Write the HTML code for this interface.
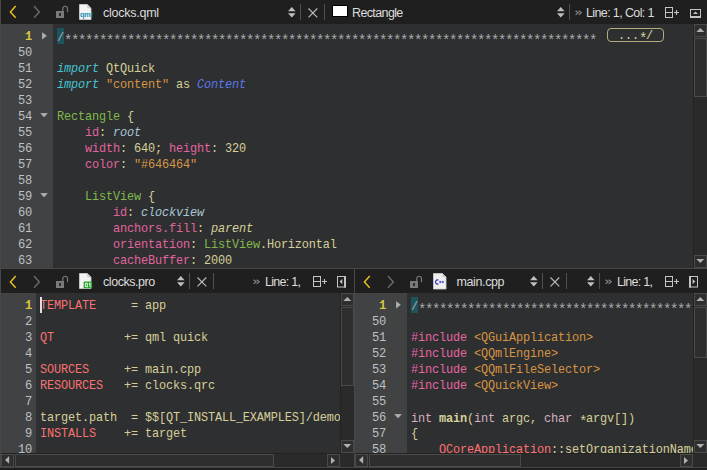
<!DOCTYPE html><html><head><meta charset="utf-8"><style>
html,body{margin:0;padding:0;background:#1e1e1e;width:707px;height:470px;overflow:hidden;position:relative}
.a{position:absolute;display:block}
.ln{position:absolute;font-family:"Liberation Mono",monospace;font-size:12.1px;letter-spacing:-0.26px;line-height:16px;height:16px;white-space:pre;text-align:right;padding-top:1px}
.code{position:absolute;font-family:"Liberation Mono",monospace;font-size:11.9px;letter-spacing:-0.14px;line-height:16px;height:16px;white-space:pre;padding-top:1px}
.ast{position:relative;top:3.5px;font-size:14px;letter-spacing:-1.4px}
.lab{position:absolute;font-family:"Liberation Sans",sans-serif;font-size:12.5px;color:#dcdcdc;white-space:pre;line-height:14px}
.sb{border:1px solid #4a4a4a;background:#2e2e2e}
</style></head><body>
<div class="a" style="left:0px;top:0px;width:707px;height:24px;background:#1f1f1f;"></div>
<svg class="a" style="left:9px;top:5px" width="9" height="14" viewBox="0 0 9 14"><path d="M6.7 1 L1.4 7 L6.7 12.7" fill="none" stroke="#e8c31e" stroke-width="1.45"/></svg>
<svg class="a" style="left:32px;top:5px" width="9" height="14" viewBox="0 0 9 14"><path d="M2 1 L7.3 7 L2 12.7" fill="none" stroke="#6a6a6a" stroke-width="1.45"/></svg>
<svg class="a" style="left:55px;top:5px" width="14" height="14" viewBox="0 0 14 14"><rect x="1" y="6" width="8" height="7" fill="#7a7a7a"/><rect x="4" y="8" width="2" height="3" fill="#2c2c2c"/><path d="M7.8 6 V3.6 A2.35 2.35 0 0 1 12.5 3.6 V7.2" fill="none" stroke="#7a7a7a" stroke-width="1.15"/></svg>
<svg class="a" style="left:79px;top:4px" width="14" height="17" viewBox="0 0 14 17"><path d="M0.5 0.5 H8.3 L12 4.2 V15.5 H0.5 Z" fill="#f4f4f4" stroke="#d2d2d2" stroke-width="0.8"/><path d="M8.3 0.5 V4.2 H12 Z" fill="#c8c8c8"/><text x="0.9" y="13.2" font-family="Liberation Sans" font-weight="bold" font-size="7.4" letter-spacing="-0.15" fill="#1c8db5">qml</text></svg>
<div class="lab" style="left:103px;top:6px;letter-spacing:-0.25px;color:#dcdcdc">clocks.qml</div>
<svg class="a" style="left:288px;top:6.5px" width="8" height="11" viewBox="0 0 8 11"><path d="M3.8 0.1 L7.6 4.2 L0 4.2 Z M0 6.2 L7.6 6.2 L3.8 10.5 Z" fill="#c0c0c0"/></svg>
<div class="a" style="left:300px;top:4px;width:1px;height:16px;background:#505050;"></div>
<svg class="a" style="left:307.5px;top:7.8px" width="10" height="10" viewBox="0 0 10 10"><path d="M0.5 0.5 L9.3 9.3 M9.3 0.5 L0.5 9.3" stroke="#b8b8b8" stroke-width="1.15"/></svg>
<div class="a" style="left:324px;top:4px;width:1px;height:16px;background:#505050;"></div>
<div class="a" style="left:332px;top:5px;width:16px;height:12px;background:#000;"></div>
<div class="a" style="left:333px;top:6px;width:14px;height:10px;background:#fff;"></div>
<div class="lab" style="left:352px;top:6px;letter-spacing:-0.62px;color:#dcdcdc">Rectangle</div>
<svg class="a" style="left:557px;top:6.5px" width="8" height="11" viewBox="0 0 8 11"><path d="M3.8 0.1 L7.6 4.2 L0 4.2 Z M0 6.2 L7.6 6.2 L3.8 10.5 Z" fill="#c0c0c0"/></svg>
<div class="a" style="left:569px;top:4px;width:1px;height:16px;background:#505050;"></div>
<svg class="a" style="left:575px;top:9.7px" width="8" height="6" viewBox="0 0 8 6"><path d="M0.6 0.7 L3.1 2.8 L0.6 4.9 M3.7 0.7 L6.2 2.8 L3.7 4.9" fill="none" stroke="#858585" stroke-width="1.2"/></svg>
<div class="lab" style="left:586px;top:6px;letter-spacing:-0.62px;color:#dcdcdc">Line: 1, Col: 1</div>
<svg class="a" style="left:664px;top:6px" width="16" height="14" viewBox="0 0 16 14"><rect x="1.5" y="1.5" width="7" height="10" fill="none" stroke="#c4c4c4"/><path d="M1 6.5 H9" stroke="#c4c4c4"/><path d="M10 6.5 H15 M12.5 4 V9" stroke="#c4c4c4" stroke-width="1.1"/></svg>
<svg class="a" style="left:689px;top:8px" width="13" height="11" viewBox="0 0 13 11"><rect x="1.5" y="1.5" width="10" height="7.5" fill="none" stroke="#c4c4c4"/><path d="M1 9 H12" stroke="#c4c4c4" stroke-width="2"/><path d="M4 6 L6.5 3.5 L9 6 Z" fill="#c4c4c4"/></svg>
<div class="a" style="left:0px;top:24px;width:693px;height:244px;background:#2e2f30;"></div>
<div class="a" style="left:0px;top:24px;width:53px;height:244px;background:#404244;"></div>
<div class="ln" style="left:0px;width:32px;top:28px;color:#d6c540;font-weight:bold">1</div>
<svg class="a" style="left:42px;top:31.5px" width="5" height="8" viewBox="0 0 5 8"><path d="M0 0 L5 3.85 L0 7.7 Z" fill="#b0b0b0" stroke="#2a2a2a" stroke-opacity="0.35" stroke-width="0.6"/></svg>
<div class="ln" style="left:0px;width:32px;top:44px;color:#bec0c2;font-weight:normal">50</div>
<div class="ln" style="left:0px;width:32px;top:60px;color:#bec0c2;font-weight:normal">51</div>
<div class="ln" style="left:0px;width:32px;top:76px;color:#bec0c2;font-weight:normal">52</div>
<div class="ln" style="left:0px;width:32px;top:92px;color:#bec0c2;font-weight:normal">53</div>
<div class="ln" style="left:0px;width:32px;top:108px;color:#bec0c2;font-weight:normal">54</div>
<svg class="a" style="left:40px;top:113px" width="9" height="5" viewBox="0 0 9 5"><path d="M0 0 L8.1 0 L4.05 4.5 Z" fill="#b0b0b0" stroke="#2a2a2a" stroke-opacity="0.35" stroke-width="0.6"/></svg>
<div class="ln" style="left:0px;width:32px;top:124px;color:#bec0c2;font-weight:normal">55</div>
<div class="ln" style="left:0px;width:32px;top:140px;color:#bec0c2;font-weight:normal">56</div>
<div class="ln" style="left:0px;width:32px;top:156px;color:#bec0c2;font-weight:normal">57</div>
<div class="ln" style="left:0px;width:32px;top:172px;color:#bec0c2;font-weight:normal">58</div>
<div class="ln" style="left:0px;width:32px;top:188px;color:#bec0c2;font-weight:normal">59</div>
<svg class="a" style="left:40px;top:193px" width="9" height="5" viewBox="0 0 9 5"><path d="M0 0 L8.1 0 L4.05 4.5 Z" fill="#b0b0b0" stroke="#2a2a2a" stroke-opacity="0.35" stroke-width="0.6"/></svg>
<div class="ln" style="left:0px;width:32px;top:204px;color:#bec0c2;font-weight:normal">60</div>
<div class="ln" style="left:0px;width:32px;top:220px;color:#bec0c2;font-weight:normal">61</div>
<div class="ln" style="left:0px;width:32px;top:236px;color:#bec0c2;font-weight:normal">62</div>
<div class="ln" style="left:0px;width:32px;top:252px;color:#bec0c2;font-weight:normal">63</div>
<div class="a" style="left:57px;top:24px;width:636px;height:244px;overflow:hidden">
<div class="a" style="left:0;top:4px;width:7px;height:16px;background:#1d545c"></div>
<div class="a" style="left:550px;top:4px;width:55px;height:12px;border:1px solid #b5ad80;border-radius:4px"></div>
<div class="code" style="left:561px;top:2px;color:#d6cf9a">...<span class="ast">*</span>/</div>
<div class="code" style="left:0;top:4px"><span style="color:#a8abb0">/<span class="ast">****************************************************************************</span></span></div>
<div class="code" style="left:0;top:20px"></div>
<div class="code" style="left:0;top:36px"><span style="color:#45c6d6;font-style:italic">import</span><span style="color:#d6cf9a"> QtQuick</span></div>
<div class="code" style="left:0;top:52px"><span style="color:#45c6d6;font-style:italic">import</span><span style="color:#d6cf9a"> </span><span style="color:#d69545">"content"</span><span style="color:#d6cf9a"> as </span><span style="color:#5b78e8;font-style:italic">Content</span></div>
<div class="code" style="left:0;top:68px"></div>
<div class="code" style="left:0;top:84px"><span style="color:#80b84c">Rectangle</span><span style="color:#d6cf9a"> {</span></div>
<div class="code" style="left:0;top:100px"><span style="color:#d6cf9a">    </span><span style="color:#e0649f">id</span><span style="color:#d6cf9a">: </span><span style="color:#a6c6d6;font-style:italic">root</span></div>
<div class="code" style="left:0;top:116px"><span style="color:#d6cf9a">    </span><span style="color:#e0649f">width</span><span style="color:#d6cf9a">: 640; </span><span style="color:#e0649f">height</span><span style="color:#d6cf9a">: 320</span></div>
<div class="code" style="left:0;top:132px"><span style="color:#d6cf9a">    </span><span style="color:#e0649f">color</span><span style="color:#d6cf9a">: </span><span style="color:#d69545">"#646464"</span></div>
<div class="code" style="left:0;top:148px"></div>
<div class="code" style="left:0;top:164px"><span style="color:#d6cf9a">    </span><span style="color:#80b84c">ListView</span><span style="color:#d6cf9a"> {</span></div>
<div class="code" style="left:0;top:180px"><span style="color:#d6cf9a">        </span><span style="color:#e0649f">id</span><span style="color:#d6cf9a">: </span><span style="color:#a6c6d6;font-style:italic">clockview</span></div>
<div class="code" style="left:0;top:196px"><span style="color:#d6cf9a">        </span><span style="color:#e0649f">anchors.fill</span><span style="color:#d6cf9a">: </span><span style="color:#d6cf9a;font-style:italic">parent</span></div>
<div class="code" style="left:0;top:212px"><span style="color:#d6cf9a">        </span><span style="color:#e0649f">orientation</span><span style="color:#d6cf9a">: </span><span style="color:#80b84c">ListView</span><span style="color:#d6cf9a">.Horizontal</span></div>
<div class="code" style="left:0;top:228px"><span style="color:#d6cf9a">        </span><span style="color:#e0649f">cacheBuffer</span><span style="color:#d6cf9a">: 2000</span></div>
</div>
<div class="a" style="left:693px;top:24px;width:14px;height:244px;background:#2a2a2a;"></div>
<div class="a" style="left:693px;top:24px;width:1px;height:244px;background:#232323;"></div>
<div class="a sb" style="left:694px;top:24px;width:11px;height:11px"></div>
<svg class="a" style="left:696px;top:28px" width="9" height="4" viewBox="0 0 9 4"><path d="M4.3 0 L8.3 4 L0.3 4 Z" fill="#b0b0b0"/></svg>
<div class="a sb" style="left:694px;top:38px;width:11px;height:57px"></div>
<div class="a sb" style="left:694px;top:255px;width:11px;height:11px"></div>
<svg class="a" style="left:696px;top:259px" width="9" height="4" viewBox="0 0 9 4"><path d="M0.3 0 L8.3 0 L4.3 4 Z" fill="#b0b0b0"/></svg>
<div class="a" style="left:0px;top:268px;width:707px;height:1px;background:#474747;"></div>
<div class="a" style="left:0px;top:269px;width:354px;height:24px;background:#1f1f1f;"></div>
<svg class="a" style="left:9px;top:274.5px" width="9" height="14" viewBox="0 0 9 14"><path d="M6.7 1 L1.4 7 L6.7 12.7" fill="none" stroke="#e8c31e" stroke-width="1.45"/></svg>
<svg class="a" style="left:32px;top:274.5px" width="9" height="14" viewBox="0 0 9 14"><path d="M2 1 L7.3 7 L2 12.7" fill="none" stroke="#6a6a6a" stroke-width="1.45"/></svg>
<svg class="a" style="left:55px;top:274.5px" width="14" height="14" viewBox="0 0 14 14"><rect x="1" y="6" width="8" height="7" fill="#7a7a7a"/><rect x="4" y="8" width="2" height="3" fill="#2c2c2c"/><path d="M7.8 6 V3.6 A2.35 2.35 0 0 1 12.5 3.6 V7.2" fill="none" stroke="#7a7a7a" stroke-width="1.15"/></svg>
<svg class="a" style="left:79px;top:272.5px" width="14" height="17" viewBox="0 0 14 17"><path d="M0.5 0.5 H8.3 L12 4.2 V15.5 H0.5 Z" fill="#f4f4f4" stroke="#d2d2d2" stroke-width="0.8"/><path d="M8.3 0.5 V4.2 H12 Z" fill="#c8c8c8"/><rect x="4.6" y="8.6" width="8.6" height="6.6" rx="0.8" fill="#23a326"/><path d="M6.3 10.2 h2 v3.4 h-2 z" fill="none" stroke="#fff" stroke-width="0.9"/><path d="M8.1 13.6 l0.9 0.8" stroke="#fff" stroke-width="0.8"/><path d="M10.8 9.6 v3.6 q0 0.6 0.6 0.6 h0.8 M9.9 11 h2.2" fill="none" stroke="#fff" stroke-width="0.9"/></svg>
<div class="lab" style="left:103px;top:275px;letter-spacing:-0.45px;color:#dcdcdc">clocks.pro</div>
<svg class="a" style="left:177px;top:276px" width="8" height="11" viewBox="0 0 8 11"><path d="M3.8 0.1 L7.6 4.2 L0 4.2 Z M0 6.2 L7.6 6.2 L3.8 10.5 Z" fill="#c0c0c0"/></svg>
<div class="a" style="left:189px;top:273px;width:1px;height:16px;background:#505050;"></div>
<svg class="a" style="left:196.8px;top:276.6px" width="10" height="10" viewBox="0 0 10 10"><path d="M0.5 0.5 L9.3 9.3 M9.3 0.5 L0.5 9.3" stroke="#b8b8b8" stroke-width="1.15"/></svg>
<div class="a" style="left:213px;top:273px;width:1px;height:16px;background:#505050;"></div>
<svg class="a" style="left:253px;top:278.7px" width="8" height="6" viewBox="0 0 8 6"><path d="M0.6 0.7 L3.1 2.8 L0.6 4.9 M3.7 0.7 L6.2 2.8 L3.7 4.9" fill="none" stroke="#858585" stroke-width="1.2"/></svg>
<div class="lab" style="left:265px;top:275px;letter-spacing:-0.73px;color:#dcdcdc">Line: 1,</div>
<svg class="a" style="left:312px;top:275px" width="16" height="14" viewBox="0 0 16 14"><rect x="1.5" y="1.5" width="7" height="10" fill="none" stroke="#c4c4c4"/><path d="M1 6.5 H9" stroke="#c4c4c4"/><path d="M10 6.5 H15 M12.5 4 V9" stroke="#c4c4c4" stroke-width="1.1"/></svg>
<svg class="a" style="left:336px;top:275px" width="11" height="13" viewBox="0 0 11 13"><rect x="1.5" y="1.5" width="8" height="10.5" fill="none" stroke="#c4c4c4"/><path d="M9 1 V12.5" stroke="#c4c4c4" stroke-width="2"/><path d="M6.3 4 L3.6 6.6 L6.3 9.2 Z" fill="#c4c4c4"/></svg>
<div class="a" style="left:0px;top:293px;width:340px;height:160px;background:#2e2f30;"></div>
<div class="a" style="left:0px;top:293px;width:36px;height:160px;background:#404244;"></div>
<div class="ln" style="left:0px;width:32px;top:297px;color:#d6c540;font-weight:bold">1</div>
<div class="ln" style="left:0px;width:32px;top:313px;color:#bec0c2;font-weight:normal">2</div>
<div class="ln" style="left:0px;width:32px;top:329px;color:#bec0c2;font-weight:normal">3</div>
<div class="ln" style="left:0px;width:32px;top:345px;color:#bec0c2;font-weight:normal">4</div>
<div class="ln" style="left:0px;width:32px;top:361px;color:#bec0c2;font-weight:normal">5</div>
<div class="ln" style="left:0px;width:32px;top:377px;color:#bec0c2;font-weight:normal">6</div>
<div class="ln" style="left:0px;width:32px;top:393px;color:#bec0c2;font-weight:normal">7</div>
<div class="ln" style="left:0px;width:32px;top:409px;color:#bec0c2;font-weight:normal">8</div>
<div class="ln" style="left:0px;width:32px;top:425px;color:#bec0c2;font-weight:normal">9</div>
<div class="ln" style="left:0px;width:32px;top:441px;color:#bec0c2;font-weight:normal">10</div>
<div class="a" style="left:40px;top:293px;width:300px;height:160px;overflow:hidden">
<div class="code" style="left:0;top:4px"><span style="color:#f87272">TEMPLATE</span><span style="color:#d6cf9a">     = app</span></div>
<div class="code" style="left:0;top:20px"></div>
<div class="code" style="left:0;top:36px"><span style="color:#f87272">QT</span><span style="color:#d6cf9a">          += qml quick</span></div>
<div class="code" style="left:0;top:52px"></div>
<div class="code" style="left:0;top:68px"><span style="color:#f87272">SOURCES</span><span style="color:#d6cf9a">     += main.cpp</span></div>
<div class="code" style="left:0;top:84px"><span style="color:#f87272">RESOURCES</span><span style="color:#d6cf9a">   += clocks.qrc</span></div>
<div class="code" style="left:0;top:100px"></div>
<div class="code" style="left:0;top:116px"><span style="color:#d6cf9a">target.path  = $$[QT_INSTALL_EXAMPLES]/demos/clocks</span></div>
<div class="code" style="left:0;top:132px"><span style="color:#f87272">INSTALLS</span><span style="color:#d6cf9a">    += target</span></div>
<div class="code" style="left:0;top:148px"></div>
</div>
<div class="a" style="left:40px;top:297px;width:2px;height:16px;background:#e0e0e0;"></div>
<div class="a" style="left:340px;top:293px;width:14px;height:160px;background:#2a2a2a;"></div>
<div class="a" style="left:340px;top:293px;width:1px;height:160px;background:#232323;"></div>
<div class="a sb" style="left:341px;top:293px;width:11px;height:11px"></div>
<svg class="a" style="left:343px;top:297px" width="9" height="4" viewBox="0 0 9 4"><path d="M4.3 0 L8.3 4 L0.3 4 Z" fill="#b0b0b0"/></svg>
<div class="a sb" style="left:341px;top:307px;width:11px;height:77px"></div>
<div class="a sb" style="left:341px;top:440px;width:11px;height:11px"></div>
<svg class="a" style="left:343px;top:444px" width="9" height="4" viewBox="0 0 9 4"><path d="M0.3 0 L8.3 0 L4.3 4 Z" fill="#b0b0b0"/></svg>
<div class="a" style="left:0px;top:453px;width:340px;height:14px;background:#2a2a2a;"></div>
<div class="a" style="left:0px;top:453px;width:340px;height:1px;background:#232323;"></div>
<div class="a sb" style="left:1px;top:454px;width:11px;height:11px"></div>
<svg class="a" style="left:4.9px;top:456px" width="5" height="8" viewBox="0 0 5 8"><path d="M4.2 0 L4.2 7.8 L0 3.9 Z" fill="#b0b0b0"/></svg>
<div class="a sb" style="left:15px;top:454px;width:257px;height:11px"></div>
<div class="a sb" style="left:327px;top:454px;width:11px;height:11px"></div>
<svg class="a" style="left:331px;top:457px" width="4" height="7" viewBox="0 0 4 7"><path d="M0 0 L4 3.5 L0 7 Z" fill="#b0b0b0"/></svg>
<div class="a" style="left:340px;top:453px;width:14px;height:14px;background:#2a2a2a;"></div>
<div class="a" style="left:355px;top:269px;width:352px;height:24px;background:#1f1f1f;"></div>
<svg class="a" style="left:363px;top:274.5px" width="9" height="14" viewBox="0 0 9 14"><path d="M6.7 1 L1.4 7 L6.7 12.7" fill="none" stroke="#e8c31e" stroke-width="1.45"/></svg>
<svg class="a" style="left:386px;top:274.5px" width="9" height="14" viewBox="0 0 9 14"><path d="M2 1 L7.3 7 L2 12.7" fill="none" stroke="#6a6a6a" stroke-width="1.45"/></svg>
<svg class="a" style="left:409px;top:274.5px" width="14" height="14" viewBox="0 0 14 14"><rect x="1" y="6" width="8" height="7" fill="#7a7a7a"/><rect x="4" y="8" width="2" height="3" fill="#2c2c2c"/><path d="M7.8 6 V3.6 A2.35 2.35 0 0 1 12.5 3.6 V7.2" fill="none" stroke="#7a7a7a" stroke-width="1.15"/></svg>
<svg class="a" style="left:433px;top:272.5px" width="14" height="17" viewBox="0 0 14 17"><path d="M0.5 0.5 H9.5 L13 4 V16 H0.5 Z" fill="#f0eeee" stroke="#cfcfcf" stroke-width="0.8"/><path d="M9.5 0.5 V4 H13 Z" fill="#c4c4c4"/><path d="M5.4 7.3 A1.8 2.1 0 1 0 5.4 10.7" fill="none" stroke="#2a3cc8" stroke-width="1.2"/><path d="M6.1 9 h2.3 M7.25 7.85 v2.3 M8.7 9 h2.3 M9.85 7.85 v2.3" stroke="#2a3cc8" stroke-width="0.85"/></svg>
<div class="lab" style="left:456.5px;top:275px;letter-spacing:-0.38px;color:#dcdcdc">main.cpp</div>
<svg class="a" style="left:530px;top:276px" width="8" height="11" viewBox="0 0 8 11"><path d="M3.8 0.1 L7.6 4.2 L0 4.2 Z M0 6.2 L7.6 6.2 L3.8 10.5 Z" fill="#c0c0c0"/></svg>
<div class="a" style="left:542px;top:273px;width:1px;height:16px;background:#505050;"></div>
<svg class="a" style="left:549.8px;top:276.6px" width="10" height="10" viewBox="0 0 10 10"><path d="M0.5 0.5 L9.3 9.3 M9.3 0.5 L0.5 9.3" stroke="#b8b8b8" stroke-width="1.15"/></svg>
<div class="a" style="left:566px;top:273px;width:1px;height:16px;background:#505050;"></div>
<svg class="a" style="left:587px;top:276px" width="8" height="11" viewBox="0 0 8 11"><path d="M3.8 0.1 L7.6 4.2 L0 4.2 Z M0 6.2 L7.6 6.2 L3.8 10.5 Z" fill="#c0c0c0"/></svg>
<div class="a" style="left:599px;top:273px;width:1px;height:16px;background:#505050;"></div>
<svg class="a" style="left:605px;top:278.7px" width="8" height="6" viewBox="0 0 8 6"><path d="M0.6 0.7 L3.1 2.8 L0.6 4.9 M3.7 0.7 L6.2 2.8 L3.7 4.9" fill="none" stroke="#858585" stroke-width="1.2"/></svg>
<div class="lab" style="left:617px;top:275px;letter-spacing:-0.73px;color:#dcdcdc">Line: 1,</div>
<svg class="a" style="left:664px;top:275px" width="16" height="14" viewBox="0 0 16 14"><rect x="1.5" y="1.5" width="7" height="10" fill="none" stroke="#c4c4c4"/><path d="M1 6.5 H9" stroke="#c4c4c4"/><path d="M10 6.5 H15 M12.5 4 V9" stroke="#c4c4c4" stroke-width="1.1"/></svg>
<svg class="a" style="left:688px;top:275px" width="11" height="13" viewBox="0 0 11 13"><rect x="1.5" y="1.5" width="8" height="10.5" fill="none" stroke="#c4c4c4"/><path d="M2 1 V12.5" stroke="#c4c4c4" stroke-width="2"/><path d="M4.6 4 L7.3 6.6 L4.6 9.2 Z" fill="#c4c4c4"/></svg>
<div class="a" style="left:355px;top:293px;width:338px;height:160px;background:#2e2f30;"></div>
<div class="a" style="left:355px;top:293px;width:52px;height:160px;background:#404244;"></div>
<div class="ln" style="left:355px;width:31px;top:297px;color:#d6c540;font-weight:bold">1</div>
<svg class="a" style="left:396px;top:300.5px" width="5" height="8" viewBox="0 0 5 8"><path d="M0 0 L5 3.85 L0 7.7 Z" fill="#b0b0b0" stroke="#2a2a2a" stroke-opacity="0.35" stroke-width="0.6"/></svg>
<div class="ln" style="left:355px;width:31px;top:313px;color:#bec0c2;font-weight:normal">50</div>
<div class="ln" style="left:355px;width:31px;top:329px;color:#bec0c2;font-weight:normal">51</div>
<div class="ln" style="left:355px;width:31px;top:345px;color:#bec0c2;font-weight:normal">52</div>
<div class="ln" style="left:355px;width:31px;top:361px;color:#bec0c2;font-weight:normal">53</div>
<div class="ln" style="left:355px;width:31px;top:377px;color:#bec0c2;font-weight:normal">54</div>
<div class="ln" style="left:355px;width:31px;top:393px;color:#bec0c2;font-weight:normal">55</div>
<div class="ln" style="left:355px;width:31px;top:409px;color:#bec0c2;font-weight:normal">56</div>
<svg class="a" style="left:394px;top:414px" width="9" height="5" viewBox="0 0 9 5"><path d="M0 0 L8.1 0 L4.05 4.5 Z" fill="#b0b0b0" stroke="#2a2a2a" stroke-opacity="0.35" stroke-width="0.6"/></svg>
<div class="ln" style="left:355px;width:31px;top:425px;color:#bec0c2;font-weight:normal">57</div>
<div class="ln" style="left:355px;width:31px;top:441px;color:#bec0c2;font-weight:normal">58</div>
<div class="a" style="left:411px;top:293px;width:282px;height:160px;overflow:hidden">
<div class="a" style="left:0;top:4px;width:7px;height:16px;background:#1d545c"></div>
<div class="code" style="left:0;top:4px"><span style="color:#a8abb0">/<span class="ast">****************************************************************************</span></span></div>
<div class="code" style="left:0;top:20px"></div>
<div class="code" style="left:0;top:36px"><span style="color:#e466a2">#include</span><span style="color:#d6cf9a"> </span><span style="color:#d69545">&lt;QGuiApplication&gt;</span></div>
<div class="code" style="left:0;top:52px"><span style="color:#e466a2">#include</span><span style="color:#d6cf9a"> </span><span style="color:#d69545">&lt;QQmlEngine&gt;</span></div>
<div class="code" style="left:0;top:68px"><span style="color:#e466a2">#include</span><span style="color:#d6cf9a"> </span><span style="color:#d69545">&lt;QQmlFileSelector&gt;</span></div>
<div class="code" style="left:0;top:84px"><span style="color:#e466a2">#include</span><span style="color:#d6cf9a"> </span><span style="color:#d69545">&lt;QQuickView&gt;</span></div>
<div class="code" style="left:0;top:100px"></div>
<div class="code" style="left:0;top:116px"><span style="color:#d6b0c0">int</span><span style="color:#d6cf9a"> </span><span style="color:#d6cf9a;font-weight:bold">main</span><span style="color:#d6cf9a">(</span><span style="color:#d6b0c0">int</span><span style="color:#d6cf9a"> argc, </span><span style="color:#d6b0c0">char</span><span style="color:#d6cf9a"> </span><span style="color:#d6cf9a"><span class="ast">*</span></span><span style="color:#d6cf9a">argv[])</span></div>
<div class="code" style="left:0;top:132px"><span style="color:#d6cf9a">{</span></div>
<div class="code" style="left:0;top:148px"><span style="color:#d6cf9a">    </span><span style="color:#ff7070">QCoreApplication</span><span style="color:#d6cf9a">::setOrganizationName(QStringLiteral("QtProject"));</span></div>
</div>
<div class="a" style="left:693px;top:293px;width:14px;height:160px;background:#2a2a2a;"></div>
<div class="a" style="left:693px;top:293px;width:1px;height:160px;background:#232323;"></div>
<div class="a sb" style="left:694px;top:293px;width:11px;height:11px"></div>
<svg class="a" style="left:696px;top:297px" width="9" height="4" viewBox="0 0 9 4"><path d="M4.3 0 L8.3 4 L0.3 4 Z" fill="#b0b0b0"/></svg>
<div class="a sb" style="left:694px;top:307px;width:11px;height:49px"></div>
<div class="a sb" style="left:694px;top:440px;width:11px;height:11px"></div>
<svg class="a" style="left:696px;top:444px" width="9" height="4" viewBox="0 0 9 4"><path d="M0.3 0 L8.3 0 L4.3 4 Z" fill="#b0b0b0"/></svg>
<div class="a" style="left:354px;top:453px;width:339px;height:14px;background:#2a2a2a;"></div>
<div class="a" style="left:354px;top:453px;width:339px;height:1px;background:#232323;"></div>
<div class="a sb" style="left:355px;top:454px;width:11px;height:11px"></div>
<svg class="a" style="left:358.9px;top:456px" width="5" height="8" viewBox="0 0 5 8"><path d="M4.2 0 L4.2 7.8 L0 3.9 Z" fill="#b0b0b0"/></svg>
<div class="a sb" style="left:369px;top:454px;width:150px;height:11px"></div>
<div class="a sb" style="left:680px;top:454px;width:11px;height:11px"></div>
<svg class="a" style="left:684px;top:457px" width="4" height="7" viewBox="0 0 4 7"><path d="M0 0 L4 3.5 L0 7 Z" fill="#b0b0b0"/></svg>
<div class="a" style="left:693px;top:453px;width:14px;height:14px;background:#2a2a2a;"></div>
<div class="a" style="left:0px;top:0px;width:1px;height:470px;background:#474747;"></div>
<div class="a" style="left:354px;top:269px;width:1px;height:198px;background:#474747;"></div>
<div class="a" style="left:0px;top:467px;width:707px;height:1px;background:#444444;"></div>
<div class="a" style="left:0px;top:468px;width:707px;height:2px;background:#1e1e1e;"></div>
</body></html>
